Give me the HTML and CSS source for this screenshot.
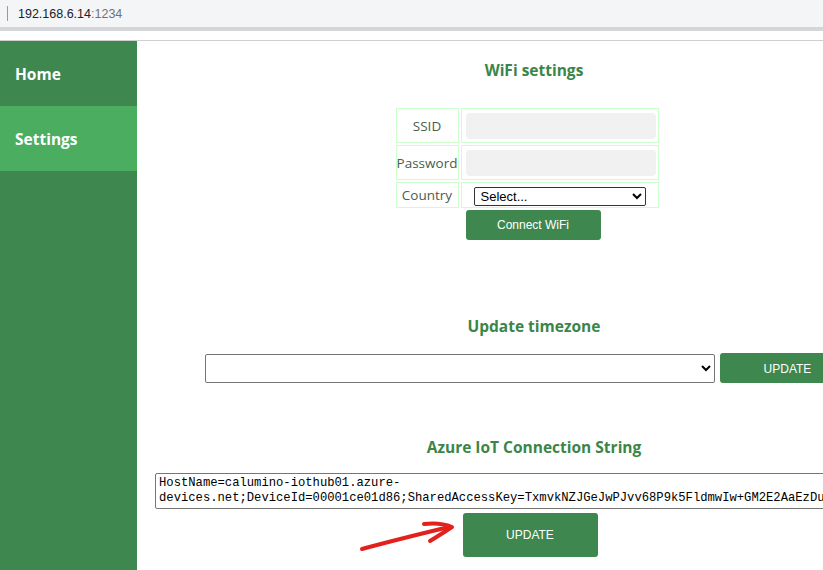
FILE: index.html
```html
<!DOCTYPE html>
<html>
<head>
<meta charset="utf-8">
<link rel="stylesheet" href="styles.css">
</head>
<body>
<div class="chrome">
  <span class="caret"></span>
  <span class="url">192.168.6.14<span class="port">:1234</span></span>
</div>
<div class="gap"></div>
<div class="app">
  <nav class="sidebar">
    <a class="nav-item">Home</a>
    <a class="nav-item active">Settings</a>
  </nav>
  <main class="main">
    <h3 class="title wifi-title">WiFi settings</h3>
    <table class="wifi">
      <tr class="row-tall">
        <td class="label">SSID</td>
        <td class="field"><input class="text" type="text"></td>
      </tr>
      <tr class="row-tall">
        <td class="label">Password</td>
        <td class="field"><input class="text" type="password"></td>
      </tr>
      <tr class="row-short">
        <td class="label">Country</td>
        <td class="field center"><select class="country"><option>Select...</option></select></td>
      </tr>
    </table>
    <div class="center-row"><button class="btn btn-wifi">Connect WiFi</button></div>

    <h3 class="title tz-title">Update timezone</h3>
    <div class="tz-row">
      <select class="tz"><option></option></select>
      <button class="btn btn-tz">UPDATE</button>
    </div>

    <h3 class="title az-title">Azure IoT Connection String</h3>
    <div class="center-row">
      <textarea class="conn" rows="2">HostName=calumino-iothub01.azure-devices.net;DeviceId=00001ce01d86;SharedAccessKey=TxmvkNZJGeJwPJvv68P9k5FldmwIw+GM2E2AaEzDu4=</textarea>
    </div>
    <div class="center-row"><button class="btn btn-az">UPDATE</button></div>
  </main>
</div>
<svg class="arrow" width="823" height="570" viewBox="0 0 823 570">
  <path d="M362 549 Q395 540 449 527" fill="none" stroke="#e3201b" stroke-width="4" stroke-linecap="round"/>
  <path d="M424 524 Q440 522 452 527 Q443 533 430 541" fill="none" stroke="#e3201b" stroke-width="4" stroke-linecap="round" stroke-linejoin="round"/>
</svg>
</body>
</html>
```
FILE: styles.css
```css
html, body {
  margin: 0;
  padding: 0;
  width: 823px;
  height: 570px;
  overflow: hidden;
  background: #fff;
  font-family: "Open Sans", "Noto Sans", sans-serif;
}

.chrome {
  height: 27px;
  background: #f4f5f7;
  border-bottom: 4px solid #d5d6da;
  display: flex;
  align-items: center;
  box-sizing: content-box;
}
.caret {
  display: inline-block;
  width: 1px;
  height: 15px;
  background: #9a9a9a;
  margin-left: 7px;
  margin-right: 10px;
}
.url {
  font-family: "Liberation Sans", Arial, sans-serif;
  font-size: 12.5px;
  color: #202124;
}
.port { color: #6f7277; }

.gap {
  height: 9px;
  border-bottom: 1px solid #cfcfcf;
}

.app {
  display: flex;
  height: 529px;
}
.sidebar {
  width: 137px;
  flex-shrink: 0;
  background: #3e874e;
  display: flex;
  flex-direction: column;
}
.nav-item {
  height: 65px;
  display: flex;
  align-items: center;
  padding-left: 15px;
  color: #fff;
  font-weight: 700;
  font-size: 15.5px;
}
.nav-item.active { background: #4bad5f; }

.main {
  width: 794px;
  flex-shrink: 0;
  display: flex;
  flex-direction: column;
}
.title {
  margin: 0;
  text-align: center;
  color: #3b8549;
  font-size: 15.5px;
  font-weight: 700;
  line-height: 22px;
}
.wifi-title { margin-top: 18px; }
.wifi {
  margin: 25px auto 0;
  border-spacing: 2px;
  position: relative;
  left: -7px;
}
.wifi td {
  border: 1px solid #ccffcc;
  padding: 0;
}
.row-tall td { height: 33px; }
.row-short td { height: 24px; }
.label {
  width: 61px;
  text-align: center;
  color: #4c5d4c;
  font-size: 13.5px;
}
.field {
  width: 191px;
  padding: 0 2px !important;
}
.field.center { text-align: center; }
.text {
  display: block;
  box-sizing: border-box;
  width: 190px;
  height: 26px;
  margin-left: 2px;
  border: none;
  border-radius: 4px;
  background: #f1f1f1;
}
.country {
  box-sizing: border-box;
  width: 172px;
  height: 19px;
  font-family: "Liberation Sans", Arial, sans-serif;
  font-size: 13px;
  border: 1px solid #333;
  border-radius: 2px;
  background: #fff;
  color: #000;
  padding: 0 2px;
  vertical-align: middle;
}
.center-row {
  display: flex;
  justify-content: center;
}
.btn {
  border: none;
  border-radius: 3px;
  background: #3e874e;
  color: #fff;
  font-family: "Liberation Sans", Arial, sans-serif;
  font-size: 12px;
  cursor: pointer;
}
.btn-wifi {
  width: 135px;
  height: 30px;
  position: relative;
  left: -1px;
}
.tz-title { margin-top: 75px; }
.tz-row {
  display: flex;
  justify-content: center;
  align-items: center;
  gap: 5px;
  margin-top: 16px;
  position: relative;
  left: -4px;
}
.tz {
  box-sizing: border-box;
  width: 510px;
  height: 29px;
  border: 1px solid #767676;
  border-radius: 2px;
  background: #fff;
}
.btn-tz {
  width: 135px;
  height: 30px;
  padding-top: 3px;
}
.az-title { margin-top: 53px; }
.conn {
  margin-top: 15px;
  box-sizing: border-box;
  width: 758px;
  height: 36px;
  resize: none;
  font-family: "Liberation Mono", "Courier New", monospace;
  font-size: 12.2px;
  line-height: 15px;
  padding: 2px 3px;
  border: 1px solid #767676;
  border-radius: 2px;
  color: #000;
  overflow: hidden;
  overflow-wrap: break-word;
}
.btn-az {
  width: 135px;
  height: 44px;
  margin-top: 4px;
  position: relative;
  left: -4px;
}

.arrow {
  position: absolute;
  left: 0;
  top: 0;
  pointer-events: none;
}
```
